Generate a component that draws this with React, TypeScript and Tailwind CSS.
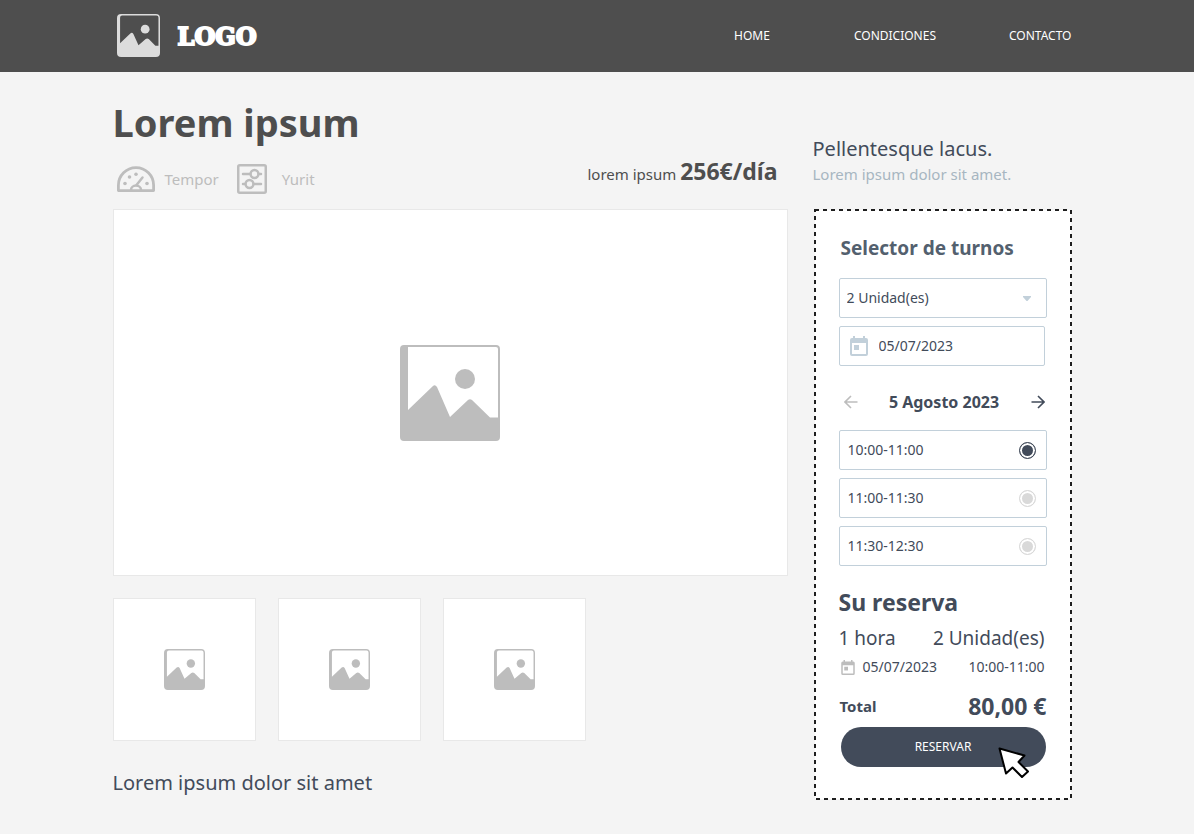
import React from "react";

function PictureIcon({ className }: { className: string }) {
  return (
    <svg viewBox="0 0 42 42" className={className} aria-hidden="true">
      <path
        fill="currentColor"
        fillRule="evenodd"
        d="M4 0H38Q42 0 42 4V38Q42 42 38 42H4Q0 42 0 38V4Q0 0 4 0ZM5 1.500Q3 1.500 3 3.700V28.500L13 19Q14.700 17.500 16 19.500L21 30.500L28 24.500Q29.500 23.500 31 24.500L37.500 31H40.500V3.500Q40.500 1.500 38.500 1.500Z"
      />
      <circle cx="27.500" cy="14.800" r="4.300" fill="currentColor" />
    </svg>
  );
}

function LargePictureIcon() {
  return (
    <svg viewBox="0 0 100 96" className="h-24 w-[100px] text-[#bdbdbd]" aria-hidden="true">
      <path
        fill="currentColor"
        fillRule="evenodd"
        d="M4 0H96Q100 0 100 4V92Q100 96 96 96H4Q0 96 0 92V4Q0 0 4 0ZM8 2V65L33 41Q35 39 37 42L50 72L68 55Q70 53.500 72 55L90 72.500H98V4Q98 2 96 2Z"
      />
      <circle cx="65" cy="34" r="10" fill="currentColor" />
    </svg>
  );
}

function GaugeIcon() {
  return (
    <svg viewBox="0 0 38 26" className="h-[26px] w-[38px]" fill="none" stroke="currentColor" strokeWidth="2.800" aria-hidden="true">
      <path d="M1.400 24.600V19.250A17.600 17.600 0 0 1 36.600 19.250V24.600Z" strokeLinejoin="round" />
      <path d="M14 24A5 4.500 0 0 1 24 24" strokeWidth="2.500" />
      <path d="M19.500 19L25.500 11.500" strokeWidth="2.500" strokeLinecap="round" />
      <g fill="currentColor" stroke="none">
        <circle cx="8" cy="17.500" r="1.800" />
        <circle cx="12.500" cy="11" r="1.800" />
        <circle cx="19" cy="8.300" r="1.800" />
        <circle cx="30" cy="17.500" r="1.800" />
      </g>
    </svg>
  );
}

function TuneIcon() {
  return (
    <svg viewBox="0 0 30 30" className="size-[30px]" fill="none" stroke="currentColor" strokeWidth="2.500" aria-hidden="true">
      <rect x="1.250" y="1.250" width="27.500" height="27.500" rx="1.500" />
      <path d="M6 10H13M22 10H24M6 20H8M17 20H24" strokeLinecap="round" />
      <circle cx="17.500" cy="10" r="3.900" />
      <circle cx="12.500" cy="20" r="3.900" />
    </svg>
  );
}

function CalendarIcon({ className }: { className: string }) {
  return (
    <svg viewBox="0 0 18 20" className={className} fill="currentColor" aria-hidden="true">
      <path
        fillRule="evenodd"
        d="M3 0H5V2H13V0H15V2H16Q18 2 18 4V18Q18 20 16 20H2Q0 20 0 18V4Q0 2 2 2H3ZM2 7V18H16V7Z"
      />
      <rect x="4" y="9" width="5" height="5" />
    </svg>
  );
}

function ArrowIcon({ className }: { className: string }) {
  return (
    <svg viewBox="0 0 14 14" className={className} fill="none" stroke="currentColor" strokeWidth="1.600" aria-hidden="true">
      <path d="M0.500 7H13M7 1L13 7L7 13" />
    </svg>
  );
}

function CursorIcon() {
  return (
    <svg
      viewBox="0 0 31 31"
      className="pointer-events-none absolute top-5 right-[17px] size-[31px]"
      fill="#fff"
      stroke="#000"
      strokeWidth="2"
      strokeLinejoin="round"
      aria-hidden="true"
    >
      <path d="M1.500 1.500L26.500 8.500L20.500 15L30 24.500L24 30L14.500 20.500L8 26.500Z" />
    </svg>
  );
}

const slots = ["10:00-11:00", "11:00-11:30", "11:30-12:30"];

export default function App() {
  return (
    <div className="bg-white pb-[5px] font-['Noto_Sans',sans-serif] text-[#424b5a]">
      <div className="bg-[#f4f4f4] pb-[34px]">
        <header className="bg-[#4e4e4e] pr-[10px] text-white">
          <div className="mx-auto flex h-[72px] max-w-[959px] items-center justify-between">
            <a href="#" className="flex items-center gap-[18px] pb-px pl-1">
              <PictureIcon className="size-[43px] text-[#dcdcdc]" />
              <span className="pt-0.5 font-['DejaVu_Serif',serif] text-[24px] font-bold [-webkit-text-stroke:2px_#fff]">LOGO</span>
            </a>
            <nav className="flex text-xs">
              <a href="#" className="mr-[84px]">HOME</a>
              <a href="#" className="mr-[73px]">CONDICIONES</a>
              <a href="#">CONTACTO</a>
            </nav>
          </div>
        </header>

        <div className="pr-[10px]">
          <div className="mx-auto flex max-w-[959px] items-start justify-between gap-[25px]">
            <main className="min-w-0 max-w-[675px] flex-1">
              <h1 className="pt-6 text-[38px] leading-[52px] font-bold text-[#4e4e4e]">Lorem ipsum</h1>
              <div className="flex h-[61px] items-center justify-between pr-[10px] pl-1">
                <div className="flex items-center pt-px text-[15px] text-[#bdbdbd]">
                  <GaugeIcon />
                  <span className="ml-[10px]">Tempor</span>
                  <span className="ml-[18px]"><TuneIcon /></span>
                  <span className="ml-[15px]">Yurit</span>
                </div>
                <p className="pb-4 text-[15px] text-[#4e4e4e]">
                  lorem ipsum <strong className="text-[23px] leading-8">256€/día</strong>
                </p>
              </div>
              <div className="flex h-[367px] items-center justify-center border border-[#e8e8e8] bg-white">
                <LargePictureIcon />
              </div>
              <div className="mt-[22px] flex gap-[22px]">
                {[1, 2, 3].map((n) => (
                  <div key={n} className="flex size-[143px] items-center justify-center border border-[#e8e8e8] bg-white">
                    <PictureIcon className="size-[41px] text-[#bdbdbd]" />
                  </div>
                ))}
              </div>
              <p className="mt-7 text-xl leading-7">Lorem ipsum dolor sit amet</p>
            </main>

            <aside className="w-[259px] shrink-0 pt-[63px]">
              <h2 className="text-xl leading-7">Pellentesque lacus.</h2>
              <p className="text-[15px] leading-[22px] text-[#a7b6c1]">Lorem ipsum dolor sit amet.</p>
              <form className="relative mt-6 ml-px flex h-[591px] flex-col px-[25px] pt-6" onSubmit={(e) => e.preventDefault()}>
                <svg className="pointer-events-none absolute inset-0 size-full overflow-visible" aria-hidden="true">
                  <rect x="1" y="1" width="256" height="589" fill="#fff" stroke="#1e1e1e" strokeWidth="2" strokeDasharray="4 4" />
                </svg>
                <div className="relative">
                  <h2 className="pl-0.5 text-[19px] leading-[30px] font-bold text-[#53606e]">Selector de turnos</h2>
                  <div className="relative mt-[15px]">
                    <select aria-label="Unidades" className="h-10 w-full appearance-none rounded-[2px] border border-[#c2d0da] bg-white px-[7px] text-sm">
                      <option>2 Unidad(es)</option>
                      <option>1 Unidad(es)</option>
                    </select>
                    <svg viewBox="0 0 8 5" className="pointer-events-none absolute top-[18px] right-4 h-[5px] w-2 text-[#c2d0da]" fill="currentColor" aria-hidden="true">
                      <path d="M0 0H8V1L4.500 5H3.500L0 1Z" />
                    </svg>
                  </div>
                  <label className="mt-2 mr-0.5 flex h-10 items-center rounded-[2px] border border-[#c2d0da] px-[10px]">
                    <CalendarIcon className="h-5 w-[18px] text-[#c2d0da]" />
                    <input aria-label="Fecha" defaultValue="05/07/2023" className="ml-[11px] w-32 bg-transparent text-sm outline-none" />
                  </label>
                  <div className="mt-6 flex h-6 items-center justify-between pr-0.5 pl-[5px]">
                    <button type="button" aria-label="Anterior" className="text-[#bdbdbd]"><ArrowIcon className="size-[14px] rotate-180" /></button>
                    <strong className="text-base">5 Agosto 2023</strong>
                    <button type="button" aria-label="Siguiente"><ArrowIcon className="size-[14px]" /></button>
                  </div>
                  <div className="mt-4 flex flex-col gap-2">
                    {slots.map((s) => (
                      <label key={s} className="flex h-10 items-center justify-between rounded-[2px] border border-[#c2d0da] pr-[10px] pl-2 text-sm">
                        {s}
                        <input
                          type="radio"
                          name="slot"
                          defaultChecked={s === slots[0]}
                          className="size-[17px] appearance-none rounded-full border border-[#d9d9d9] bg-[#d9d9d9] shadow-[inset_0_0_0_2px_#fff] checked:border-[#424b5a] checked:bg-[#424b5a]"
                        />
                      </label>
                    ))}
                  </div>
                  <h2 className="mt-5 text-[23px] leading-8 font-bold">Su reserva</h2>
                  <div className="mt-1 flex justify-between pr-0.5 text-[19px] leading-8">
                    <span>1 hora</span>
                    <span>2 Unidad(es)</span>
                  </div>
                  <div className="mt-[3px] flex items-center pr-0.5 pl-0.5 text-sm leading-5">
                    <CalendarIcon className="h-[15px] w-[14px] text-[#bdbdbd]" />
                    <span className="ml-2">05/07/2023</span>
                    <span className="ml-auto">10:00-11:00</span>
                  </div>
                  <div className="mt-[13px] flex items-center justify-between pl-px font-bold">
                    <span className="text-[15px]">Total</span>
                    <span className="text-[23px] leading-8">80,00 €</span>
                  </div>
                  <div className="relative mt-[5px] mr-px ml-0.5">
                    <button type="submit" className="h-10 w-full rounded-full bg-[#424b5a] text-xs text-white">RESERVAR</button>
                    <CursorIcon />
                  </div>
                </div>
              </form>
            </aside>
          </div>
        </div>
      </div>
    </div>
  );
}
